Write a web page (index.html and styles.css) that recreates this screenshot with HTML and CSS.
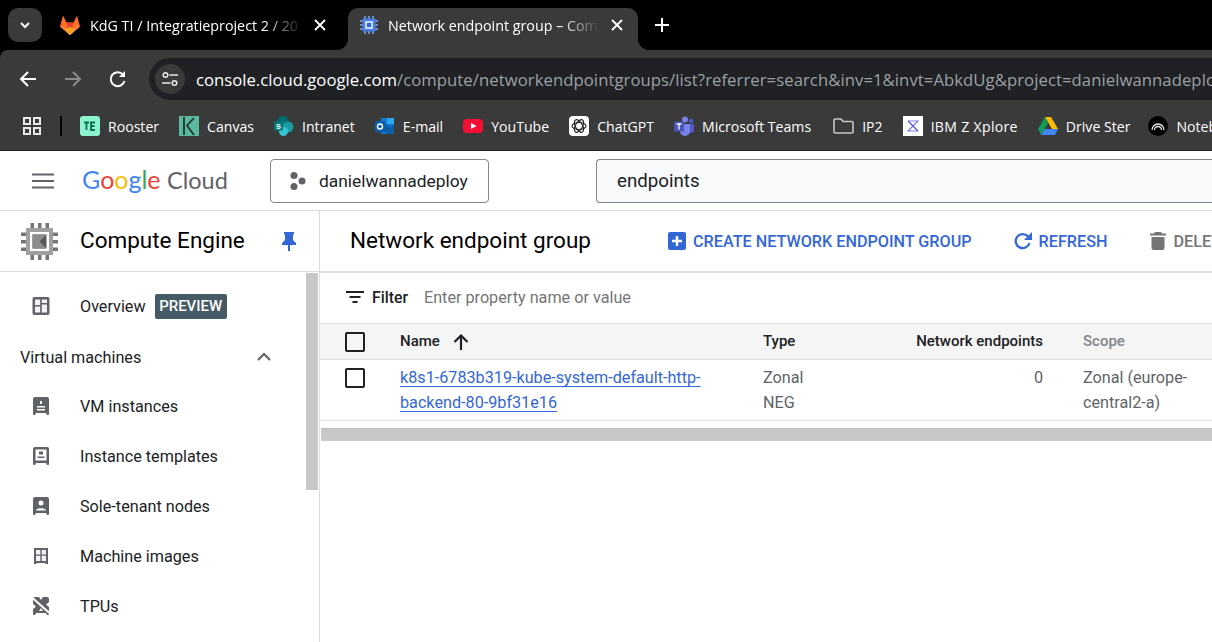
FILE: index.html
```html
<!DOCTYPE html>
<html>
<head>
     <title>Network endpoint group – Compute Engine</title>
     <link rel="stylesheet" href="styles.css">
</head>
<body>
     <!-- Browser chrome -->
     <div class="tabstrip">
          <div class="tabsearch">
               <svg width="14" height="14" viewBox="0 0 14 14"><path d="M3 5l4 4 4-4" fill="none" stroke="#fff" stroke-width="2"/></svg>
          </div>
          <div class="tab first">
               <svg class="favicon" width="22" height="22" viewBox="0 0 22 22"><path d="M11 21L1 12.500 4 1.500l3.500 7h7l3.500-7 3 11z" fill="#fc6d26"/><path d="M11 21L7.500 8.500h7z" fill="#e24329"/><path d="M1 12.500L11 21l-5.500-9z" fill="#f9812c"/><path d="M21 12.500L11 21l5.500-9z" fill="#f9812c"/><path d="M5.500 15.800L11 13l5.500 2.800L11 21z" fill="#fca326"/></svg>
               <span class="tabtitle">KdG TI / Integratieproject 2 / 20</span>
               <svg class="tabclose" width="12" height="12" viewBox="0 0 12 12"><path d="M1 1l10 10M11 1L1 11" stroke="#fff" stroke-width="1.800"/></svg>
          </div>
          <div class="tab active">
               <svg class="favicon" width="18" height="18" viewBox="0 0 18 18"><path d="M5 0v18M9 0v18M13 0v18M0 5h18M0 9h18M0 13h18" stroke="#7baaf7" stroke-width="1.500"/><rect x="2.500" y="2.500" width="13" height="13" fill="#4b7de0"/><rect x="5" y="5" width="8" height="8" fill="#c6dafc"/><rect x="7" y="7" width="4" height="4" fill="#3367d6"/></svg>
               <span class="tabtitle">Network endpoint group – Com</span>
               <svg class="tabclose" width="12" height="12" viewBox="0 0 12 12"><path d="M1 1l10 10M11 1L1 11" stroke="#fff" stroke-width="1.800"/></svg>
          </div>
          <svg class="newtab" width="14" height="14" viewBox="0 0 14 14"><path d="M7 0v14M0 7h14" stroke="#fff" stroke-width="2"/></svg>
     </div>

     <div class="toolbar">
          <svg class="navicon" width="18" height="18" viewBox="0 0 18 18"><path d="M17 9H2M9 2L2 9l7 7" fill="none" stroke="#fff" stroke-width="2"/></svg>
          <svg class="navicon" width="18" height="18" viewBox="0 0 18 18"><path d="M1 9h15M9 2l7 7-7 7" fill="none" stroke="#8a8a8a" stroke-width="2"/></svg>
          <svg class="navicon" width="18" height="18" viewBox="0 0 18 18"><path d="M15.500 11a7 7 0 1 1-1.500-6.500" fill="none" stroke="#fff" stroke-width="2"/><path d="M16 1v6h-6z" fill="#fff"/></svg>
          <div class="omnibox">
               <div class="siteinfo">
                    <svg width="16" height="16" viewBox="0 0 16 16"><circle cx="3.500" cy="4" r="2.300" fill="none" stroke="#e8eaed" stroke-width="1.500"/><path d="M7.500 4H16M0 12h8.500" stroke="#e8eaed" stroke-width="1.500"/><circle cx="12.500" cy="12" r="2.300" fill="none" stroke="#e8eaed" stroke-width="1.500"/></svg>
               </div>
               <div class="url"><span class="host">console.cloud.google.com</span>/compute/networkendpointgroups/list?referrer=search&amp;inv=1&amp;invt=AbkdUg&amp;project=danielwannadeploy</div>
          </div>
     </div>

     <div class="bookmarks">
          <svg class="apps" width="18" height="18" viewBox="0 0 18 18"><path d="M1 1h6v6H1zM11 1h6v6h-6zM1 11h6v6H1zM11 11h6v6h-6z" fill="none" stroke="#e8eaed" stroke-width="2"/></svg>
          <div class="bmdivider"></div>
          <div class="bm">
               <svg width="20" height="20" viewBox="0 0 20 20"><rect width="20" height="20" rx="3" fill="#8df5cd"/><path d="M4 6.500h5M6.500 6.500V14M15 6.500h-4v7.500h4M11 10h3.500" fill="none" stroke="#0d6e52" stroke-width="1.800"/></svg>
               <span>Rooster</span>
          </div>
          <div class="bm">
               <svg width="20" height="20" viewBox="0 0 20 20"><rect width="20" height="20" fill="#5bb79d"/><path d="M5 1v18M15 2L8 9.500 15 19" fill="none" stroke="#16352c" stroke-width="1.800"/></svg>
               <span>Canvas</span>
          </div>
          <div class="bm">
               <svg width="20" height="20" viewBox="0 0 20 20"><circle cx="9" cy="6" r="6" fill="#036c70"/><circle cx="14" cy="11" r="5.500" fill="#1a9ba1"/><circle cx="9.500" cy="15.500" r="4.500" fill="#37c6d0"/><rect x="0" y="5.500" width="9" height="9" rx="1" fill="#03787c"/><text x="4.500" y="12.500" class="bmletter">s</text></svg>
               <span>Intranet</span>
          </div>
          <div class="bm">
               <svg width="20" height="20" viewBox="0 0 20 20"><rect x="6" y="2" width="13" height="16" fill="#0f78d4"/><rect x="12" y="2" width="7" height="6" fill="#28a8ea"/><rect x="6" y="8" width="7" height="5" fill="#0364b8"/><path d="M6 13l7 5h6V9z" fill="#14447d" opacity=".5"/><rect x="0" y="5" width="10" height="11" rx="1" fill="#0a5ea8"/><circle cx="5" cy="10.500" r="2.500" fill="none" stroke="#fff" stroke-width="1.400"/></svg>
               <span>E-mail</span>
          </div>
          <div class="bm">
               <svg width="20" height="20" viewBox="0 0 20 20"><rect y="3" width="20" height="14" rx="4" fill="#f40f33"/><path d="M8 7l5.500 3L8 13z" fill="#fff"/></svg>
               <span>YouTube</span>
          </div>
          <div class="bm">
               <svg width="20" height="20" viewBox="0 0 20 20"><rect width="20" height="20" rx="4" fill="#fff"/><g fill="none" stroke="#222" stroke-width="1.100"><ellipse cx="10" cy="10" rx="7" ry="3.500"/><ellipse cx="10" cy="10" rx="7" ry="3.500" transform="rotate(60 10 10)"/><ellipse cx="10" cy="10" rx="7" ry="3.500" transform="rotate(120 10 10)"/></g></svg>
               <span>ChatGPT</span>
          </div>
          <div class="bm teams">
               <svg width="20" height="20" viewBox="0 0 20 20"><circle cx="11" cy="3.500" r="3" fill="#7b83eb"/><circle cx="17" cy="5" r="2.300" fill="#5059c9"/><path d="M14 8h6v6a3 3 0 0 1-6 0z" fill="#5059c9"/><path d="M6 8h10v7a5 5 0 0 1-10 0z" fill="#7b83eb"/><rect x="0" y="5.500" width="10" height="10" rx="1" fill="#4b53bc"/><path d="M2.500 8h5M5 8v5.500" stroke="#fff" stroke-width="1.300"/></svg>
               <span>Microsoft Teams</span>
          </div>
          <div class="bm">
               <svg width="21" height="18" viewBox="0 0 21 18"><path d="M1 3a1 1 0 0 1 1-1h6l2 2.500h9a1 1 0 0 1 1 1V15a1 1 0 0 1-1 1H2a1 1 0 0 1-1-1z" fill="none" stroke="#c4c7c5" stroke-width="1.600"/></svg>
               <span>IP2</span>
          </div>
          <div class="bm ibm">
               <svg width="20" height="20" viewBox="0 0 20 20"><rect width="20" height="20" fill="#fff"/><path d="M5 5h10L5 15h10" fill="none" stroke="#7d7df0" stroke-width="1.200"/><path d="M5 5l10 10" stroke="#5252c8" stroke-width="1.200"/></svg>
               <span>IBM Z Xplore</span>
          </div>
          <div class="bm drive">
               <svg width="20" height="18" viewBox="0 0 20 18"><path d="M7 0h6l7 12h-6z" fill="#fbbc04"/><path d="M7 0L0 12l3 6 7-12z" fill="#0f9d58"/><path d="M3 18h14l3-6H6.500z" fill="#4285f4"/></svg>
               <span>Drive Ster</span>
          </div>
          <div class="bm">
               <svg width="20" height="20" viewBox="0 0 20 20"><circle cx="10" cy="10" r="10" fill="#000"/><path d="M4 14a6 6 0 0 1 12 0M6.500 14a3.500 3.500 0 0 1 7 0" fill="none" stroke="#e8eaed" stroke-width="1.300"/></svg>
               <span>NotebookLM</span>
          </div>
     </div>

     <!-- Cloud console -->
     <div class="console">
          <div class="topbar">
               <svg class="menu" width="24" height="18" viewBox="0 0 24 18"><path d="M1 2.500h22M1 9h22M1 15.500h22" stroke="#5f6368" stroke-width="2"/></svg>
               <div class="logo"><span class="g-blue">G</span><span class="g-red">o</span><span class="g-yellow">o</span><span class="g-blue">g</span><span class="g-green">l</span><span class="g-red">e</span> <span class="cloud">Cloud</span></div>
               <div class="project">
                    <svg width="18" height="18" viewBox="0 0 18 18"><circle cx="5" cy="3.500" r="3.500" fill="#5f6368"/><circle cx="13" cy="9" r="3.500" fill="#5f6368"/><circle cx="5" cy="14.500" r="3.500" fill="#5f6368"/></svg>
                    <span>danielwannadeploy</span>
               </div>
               <div class="search">endpoints</div>
          </div>

          <div class="main">
               <div class="sidebar">
                    <div class="sidehead">
                         <svg width="37" height="37" viewBox="0 0 37 37"><path d="M9.500 0h3.500v6H9.500zM17 0h3.500v6H17zM24.500 0H28v6h-3.500zM9.500 31h3.500v6H9.500zM17 31h3.500v6H17zM24.500 31H28v6h-3.500zM0 9.500h6V13H0zM0 17h6v3.500H0zM0 24.500h6V28H0zM31 9.500h6V13h-6zM31 17h6v3.500h-6zM31 24.500h6V28h-6z" fill="#757575"/><path d="M5 5h27v27H5zM9 9v19h19V9z" fill-rule="evenodd" fill="#a0a0a0"/><path d="M11.500 11.500h14v14h-14z" fill="#5a5a5a"/><path d="M11.500 11.500h14l-7 7 7 7h-14z" fill="#8c8c8c"/></svg>
                         <h2>Compute Engine</h2>
                         <svg class="pin" width="16" height="20" viewBox="0 0 16 20"><path d="M3 1h10v2l-1 1v5l3 3v2H9v6H7v-6H1v-2l3-3V4L3 3z" fill="#3367d6"/></svg>
                    </div>
                    <div class="sidebody">
                         <div class="nav">
                              <div class="navitem">
                                   <svg width="20" height="20" viewBox="0 0 20 20"><rect x="1.500" y="1" width="17" height="18" rx="2" fill="#5f6368"/><path d="M4 3.500h5.200V9H4zM10.800 3.500H16V7h-5.200zM4 10.500h5.200v6H4zM10.800 8.500H16v8h-5.200z" fill="#f1f3f4"/></svg>
                                   <span>Overview</span>
                                   <span class="badge">PREVIEW</span>
                              </div>
                              <div class="navgroup">
                                   <span>Virtual machines</span>
                                   <svg width="16" height="10" viewBox="0 0 16 10"><path d="M2 8l6-6 6 6" fill="none" stroke="#5f6368" stroke-width="2.200"/></svg>
                              </div>
                              <div class="navitem">
                                   <svg width="20" height="20" viewBox="0 0 20 20"><path d="M2 3a2 2 0 0 1 2-2h12a2 2 0 0 1 2 2v15a1 1 0 0 1-1 1h-1l-1-2H5l-1 2H3a1 1 0 0 1-1-1z" fill="#5f6368"/><path d="M9 5h2v3H9zM6 10h8v1.500H6zM6 13h8v1.500H6z" fill="#fff"/></svg>
                                   <span>VM instances</span>
                              </div>
                              <div class="navitem">
                                   <svg width="20" height="20" viewBox="0 0 20 20"><path d="M2 3a2 2 0 0 1 2-2h12a2 2 0 0 1 2 2v15a1 1 0 0 1-1 1h-1l-1-2H5l-1 2H3a1 1 0 0 1-1-1z" fill="#5f6368"/><path d="M4.500 3.500h11v11h-11z" fill="#fff"/><path d="M8 5.500h4v3H8zM6.500 10.500h7V12h-7z" fill="#5f6368"/></svg>
                                   <span>Instance templates</span>
                              </div>
                              <div class="navitem">
                                   <svg width="20" height="20" viewBox="0 0 20 20"><path d="M2 3a2 2 0 0 1 2-2h12a2 2 0 0 1 2 2v15a1 1 0 0 1-1 1h-1l-1-2H5l-1 2H3a1 1 0 0 1-1-1z" fill="#5f6368"/><circle cx="10" cy="7" r="2.500" fill="#fff"/><path d="M5 14.500c0-3 10-3 10 0z" fill="#fff"/></svg>
                                   <span>Sole-tenant nodes</span>
                              </div>
                              <div class="navitem">
                                   <svg width="20" height="20" viewBox="0 0 20 20"><path d="M3 2h14v16h-2l-1-1H6l-1 1H3z" fill="#5f6368"/><path d="M5 4h4.300v4.500H5zM10.700 4H15v4.500h-4.300zM5 9.800h4.300V15H5zM10.700 9.800H15V15h-4.300z" fill="#f1f3f4"/></svg>
                                   <span>Machine images</span>
                              </div>
                              <div class="navitem">
                                   <svg width="20" height="20" viewBox="0 0 20 20"><path d="M2 3a2 2 0 0 1 2-2h12a2 2 0 0 1 2 2v15a1 1 0 0 1-1 1h-1l-1-2H5l-1 2H3a1 1 0 0 1-1-1z" fill="#5f6368"/><path d="M1 1.500l18 16" stroke="#fff" stroke-width="2"/><path d="M8 1h4l-2 3zM2 8l3 2.500L2 13zM18 6l-3 2.500L18 11zM8 15h4l-2-3z" fill="#fff"/></svg>
                                   <span>TPUs</span>
                              </div>
                         </div>
                         <div class="sidescroll"><div class="sidethumb"></div></div>
                    </div>
               </div>

               <div class="content">
                    <div class="pagehead">
                         <h1>Network endpoint group</h1>
                         <div class="action blue create">
                              <svg width="18" height="18" viewBox="0 0 18 18"><rect width="18" height="18" rx="2" fill="#3367d6"/><path d="M9 4v10M4 9h10" stroke="#fff" stroke-width="2.400"/></svg>
                              <span>CREATE NETWORK ENDPOINT GROUP</span>
                         </div>
                         <div class="action blue refresh">
                              <svg width="18" height="18" viewBox="0 0 18 18"><path d="M15.500 11a7 7 0 1 1-1.500-6.500" fill="none" stroke="#3367d6" stroke-width="2.300"/><path d="M18 0v8h-8z" fill="#3367d6"/></svg>
                              <span>REFRESH</span>
                         </div>
                         <div class="action grey">
                              <svg width="16" height="18" viewBox="0 0 16 18"><path d="M5 0h6l1 1.500h4v2H0v-2h4zM1.500 5h13v11a2 2 0 0 1-2 2h-9a2 2 0 0 1-2-2z" fill="#757575"/></svg>
                              <span>DELETE</span>
                         </div>
                    </div>

                    <div class="filterbar">
                         <svg width="18" height="14" viewBox="0 0 18 14"><path d="M0 2h18M3.500 7h11M6.500 12h5" stroke="#202124" stroke-width="2"/></svg>
                         <span class="filterlabel">Filter</span>
                         <span class="filterhint">Enter property name or value</span>
                    </div>

                    <table class="negtable">
                         <colgroup>
                              <col class="c-check">
                              <col class="c-name">
                              <col class="c-type">
                              <col class="c-count">
                              <col class="c-scope">
                         </colgroup>
                         <thead>
                              <tr>
                                   <th><div class="checkbox"></div></th>
                                   <th>
                                        <div class="namehead">Name
                                             <svg width="16" height="16" viewBox="0 0 16 16"><path d="M8 16V2M1.500 8L8 1.500 14.500 8" fill="none" stroke="#202124" stroke-width="2.200"/></svg>
                                        </div>
                                   </th>
                                   <th>Type</th>
                                   <th class="num">Network endpoints</th>
                                   <th class="muted">Scope</th>
                              </tr>
                         </thead>
                         <tbody>
                              <tr>
                                   <td class="checkcell"><div class="checkbox"></div></td>
                                   <td class="namecell"><a href="#">k8s1-6783b319-kube-system-default-http-backend-80-9bf31e16</a></td>
                                   <td class="typecell">Zonal NEG</td>
                                   <td class="num">0</td>
                                   <td>Zonal (europe-central2-a)</td>
                              </tr>
                         </tbody>
                    </table>
                    <div class="hscroll"></div>
               </div>
          </div>
     </div>
</body>
</html>
```

FILE: styles.css
```css
html, body {
     margin: 0;
     height: 642px;
     overflow: hidden;
     background-color: #000;
}

body {
     font-family: Roboto, sans-serif;
     font-size: 16.2px;
     color: #202124;
}

/* Browser chrome */
.tabstrip {
     height: 50px;
     background-color: #000;
     display: flex;
     align-items: flex-end;
     font-family: "Open Sans", sans-serif;
     color: #fff;
}

.tabsearch {
     width: 34px;
     height: 34px;
     margin: 0 6px 8px 8px;
     background-color: #3a3a3a;
     border-radius: 10px;
     display: flex;
     justify-content: center;
     align-items: center;
}

.tab {
     width: 290px;
     height: 42px;
     display: flex;
     align-items: center;
     box-sizing: border-box;
     padding: 0 15px 8px 12px;
     font-size: 14.300px;
}

.tab.first {
     padding-left: 11px;
     padding-right: 12px;
     margin-right: 10px;
}

.tab .favicon {
     flex: none;
     margin-right: 10px;
}

.tab.first .favicon {
     margin-right: 9px;
}

.tabtitle {
     flex: 1;
     white-space: nowrap;
     overflow: hidden;
     margin-right: 12px;
     -webkit-mask-image: linear-gradient(to right, #000 82%, transparent 100%);
     mask-image: linear-gradient(to right, #000 82%, transparent 100%);
}

.tab.active {
     position: relative;
     background-color: #3a3a3a;
     border-radius: 10px 10px 0 0;
}

.tab.active::before, .tab.active::after {
     content: "";
     position: absolute;
     bottom: 0;
     width: 12px;
     height: 12px;
}

.tab.active::before {
     left: -12px;
     background: radial-gradient(circle at 0 0, transparent 12px, #3a3a3a 12.500px);
}

.tab.active::after {
     right: -12px;
     background: radial-gradient(circle at 100% 0, transparent 12px, #3a3a3a 12.500px);
}

.newtab {
     margin: 0 0 18px 17px;
}

.toolbar {
     height: 58px;
     background-color: #3a3a3a;
     border-top-left-radius: 8px;
     display: flex;
     align-items: center;
     box-sizing: border-box;
     padding-left: 19px;
     overflow: hidden;
}

.navicon {
     margin-right: 27px;
     flex: none;
}

.omnibox {
     flex: none;
     width: 1200px;
     height: 42px;
     margin-left: -5px;
     background-color: #202124;
     border-radius: 21px;
     display: flex;
     align-items: center;
     padding-left: 6px;
     color: #9aa0a6;
     font-family: "Open Sans", sans-serif;
     font-size: 16.700px;
     letter-spacing: 0.06px;
     white-space: nowrap;
}

.siteinfo {
     width: 30px;
     height: 30px;
     border-radius: 15px;
     background-color: #3a3a3a;
     display: flex;
     justify-content: center;
     align-items: center;
     margin-right: 11px;
}

.host {
     color: #fff;
     letter-spacing: 0;
}

.bookmarks {
     height: 42px;
     background-color: #3a3a3a;
     display: flex;
     align-items: center;
     box-sizing: border-box;
     padding: 0 0 6px 23px;
     color: #fff;
     font-family: "Open Sans", sans-serif;
     font-size: 14.100px;
     white-space: nowrap;
     overflow: hidden;
}

.apps {
     flex: none;
}

.bmdivider {
     flex: none;
     width: 2px;
     height: 20px;
     background-color: #000;
     margin: 0 18px 0 19px;
}

.bm {
     flex: none;
     display: flex;
     align-items: center;
     gap: 8px;
     margin-right: 20px;
}

.bm.teams {
     margin-right: 22px;
}

.bm.drive {
     margin-right: 18px;
}

.bm.ibm {
     letter-spacing: 0.3px;
}

.bmletter {
     font-family: "Liberation Sans", sans-serif;
     font-size: 9px;
     font-weight: bold;
     fill: #fff;
     text-anchor: middle;
}

/* Console */
.console {
     height: 492px;
     box-sizing: border-box;
     background-color: #fff;
     border-top: 1px solid #222;
}

.topbar {
     height: 59px;
     border-bottom: 1px solid #dadce0;
     display: flex;
     align-items: center;
     padding-left: 31px;
}

.menu {
     margin-right: 27px;
}

.logo {
     width: 188px;
     padding-bottom: 3px;
     font-family: Lato, sans-serif;
     font-size: 25px;
     white-space: nowrap;
}

.g-blue { color: #4285f4; }
.g-red { color: #ea4335; }
.g-yellow { color: #fbbc04; }
.g-green { color: #34a853; }

.cloud {
     color: #5f6368;
     font-size: 23.500px;
}

.project {
     width: 219px;
     height: 44px;
     flex: none;
     box-sizing: border-box;
     border: 1px solid #80868b;
     border-radius: 4px;
     display: flex;
     align-items: center;
     gap: 12px;
     padding-left: 18px;
     font-size: 17.400px;
     margin-right: 107px;
}

.project svg {
     flex: none;
}

.search {
     flex: 1;
     height: 44px;
     box-sizing: border-box;
     border: 1px solid #80868b;
     border-right: none;
     border-radius: 4px 0 0 4px;
     background-color: #f8f9fa;
     display: flex;
     align-items: center;
     padding-left: 20px;
     font-size: 18.700px;
}

.main {
     display: flex;
}

.sidebar {
     width: 319px;
     border-right: 1px solid #dadce0;
     height: 431px;
     flex: none;
}

.sidehead {
     height: 60px;
     border-bottom: 1px solid #dadce0;
     display: flex;
     align-items: center;
     padding-left: 21px;
}

.sidehead h2 {
     margin: 0 0 2px 22px;
     width: 201px;
     font-size: 22.500px;
     font-weight: 400;
     color: #000;
}

.sidebody {
     display: flex;
}

.nav {
     flex: 1;
     padding-top: 9px;
}

.navitem {
     height: 50px;
     display: flex;
     align-items: center;
     padding-left: 31px;
}

.navitem svg {
     margin-right: 29px;
}

.badge {
     margin-left: 9px;
     background-color: #455a64;
     color: #fff;
     font-size: 15px;
     font-weight: 500;
     padding: 3px 4.500px;
     border-radius: 2px;
     line-height: 19px;
}

.navgroup {
     height: 50px;
     box-sizing: border-box;
     display: flex;
     align-items: center;
     justify-content: space-between;
     padding: 2px 34px 0 20px;
}

.sidescroll {
     width: 12px;
     margin: 1px 1px 0 0;
}

.sidethumb {
     height: 217px;
     background-color: #c8c8c8;
}

.content {
     flex: 1;
     min-width: 0;
}

.pagehead {
     height: 60px;
     border-bottom: 2px solid #e0e0e0;
     display: flex;
     align-items: center;
     padding-left: 30px;
     white-space: nowrap;
     overflow: hidden;
}

.pagehead h1 {
     margin: 0 0 2px 0;
     width: 318px;
     flex: none;
     font-size: 22.500px;
     font-weight: 400;
     color: #000;
}

.action {
     display: flex;
     align-items: center;
     gap: 7px;
     font-weight: 500;
     flex: none;
}

.blue {
     color: #3367d6;
}

.grey {
     color: #757575;
}

.create {
     margin-right: 42px;
}

.refresh {
     margin-right: 43px;
}

.filterbar {
     height: 50px;
     box-sizing: border-box;
     display: flex;
     align-items: center;
     padding: 0 0 2px 26px;
}

.filterlabel {
     font-size: 15.750px;
     font-weight: 500;
     margin-left: 8px;
}

.filterhint {
     margin-left: 16px;
     color: #757575;
}

.negtable {
     table-layout: fixed;
     width: 892px;
     border-collapse: collapse;
}

.c-check { width: 80px; }
.c-name { width: 363px; }
.c-type { width: 100px; }
.c-count { width: 180px; }
.c-scope { width: 169px; }

.negtable th {
     height: 33px;
     padding: 0 0 2px 0;
     text-align: left;
     font-weight: 500;
     font-size: 15px;
     background-color: #f5f5f5;
     border-top: 1px solid #e0e0e0;
     border-bottom: 1px solid #e0e0e0;
}

.negtable td {
     padding: 5px 0;
     line-height: 25px;
     color: #5f6368;
     vertical-align: top;
     border-bottom: 1px solid #e0e0e0;
}

.negtable .namecell {
     padding-right: 40px;
}

.negtable .typecell {
     padding-right: 30px;
}

.negtable .num {
     text-align: right;
}

.negtable td:last-child, .negtable th:last-child {
     padding-left: 40px;
     padding-right: 20px;
}

.negtable .muted {
     color: #80868b;
}

.negtable a {
     color: #3367d6;
     text-underline-offset: 3px;
}

.namehead {
     display: flex;
     align-items: center;
     gap: 13px;
}

.namehead svg {
     margin-top: 2px;
}

.checkbox {
     width: 16px;
     height: 16px;
     border: 2px solid #202124;
     border-radius: 2px;
     margin-left: 25px;
}

.negtable th .checkbox {
     margin-top: 2px;
}

.checkcell .checkbox {
     margin-top: 3px;
}

.hscroll {
     height: 12px;
     margin: 7px 0 0 1px;
     background-color: #c8c8c8;
     border-top: 1px solid #bbb;
}
```
